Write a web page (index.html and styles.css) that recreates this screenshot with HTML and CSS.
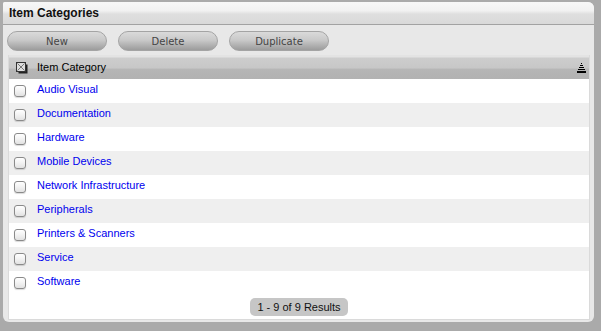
FILE: index.html
```html
<!DOCTYPE html>
<html lang="en">

<head>
    <meta charset="UTF-8">
    <title>Item Categories</title>
    <link rel="stylesheet" href="styles.css">
</head>

<body>
    <div class="panel">
        <div class="panel-title">Item Categories</div>

        <div class="toolbar">
            <button class="btn">New</button>
            <button class="btn">Delete</button>
            <button class="btn">Duplicate</button>
        </div>

        <div class="list">
            <div class="list-head">
                <svg class="select-all" width="12" height="12" viewBox="0 0 12 12">
                    <rect x="2.5" y="2.5" width="9" height="9" fill="#222"/>
                    <rect x="0.5" y="0.5" width="9" height="9" fill="#ddd" stroke="#333"/>
                    <path d="M1.5 1.5 L8.5 8.5 M8.5 1.5 L1.5 8.5" stroke="#777" stroke-width="1"/>
                </svg>
                <span class="head-label">Item Category</span>
                <svg class="sort" width="9" height="10" viewBox="0 0 9 10">
                    <rect x="4" y="0" width="1" height="1" fill="#000"/>
                    <rect x="3" y="2" width="3" height="1" fill="#000"/>
                    <rect x="2" y="4" width="5" height="1" fill="#000"/>
                    <rect x="1" y="6" width="7" height="1" fill="#000"/>
                    <rect x="0" y="8" width="9" height="2" fill="#000"/>
                </svg>
            </div>

            <div class="rows">
                <div class="row"><span class="check"></span><a href="#">Audio Visual</a></div>
                <div class="row"><span class="check"></span><a href="#">Documentation</a></div>
                <div class="row"><span class="check"></span><a href="#">Hardware</a></div>
                <div class="row"><span class="check"></span><a href="#">Mobile Devices</a></div>
                <div class="row"><span class="check"></span><a href="#">Network Infrastructure</a></div>
                <div class="row"><span class="check"></span><a href="#">Peripherals</a></div>
                <div class="row"><span class="check"></span><a href="#">Printers &amp; Scanners</a></div>
                <div class="row"><span class="check"></span><a href="#">Service</a></div>
                <div class="row"><span class="check"></span><a href="#">Software</a></div>
            </div>

            <div class="list-foot">
                <span class="results">1 - 9 of 9 Results</span>
            </div>
        </div>
    </div>
</body>

</html>
```

FILE: styles.css
```css
html,
body {
    margin: 0;
    height: 100%;
}

body {
    background: #aaaaaa;
    padding: 2px 7px 9px 3px;
    box-sizing: border-box;
    font-family: "Liberation Sans", Arial, sans-serif;
    font-size: 11px;
}

.panel {
    height: 320px;
    background: #e8e8e8;
    border-radius: 2px 6px 6px 6px;
    display: flex;
    flex-direction: column;
    overflow: hidden;
}

.panel-title {
    height: 22px;
    line-height: 22px;
    padding-left: 6px;
    font-size: 12px;
    font-weight: bold;
    color: #111;
    background: linear-gradient(#f7f7f7, #f1f1f1 40%, #dfdfdf 55%, #d9d9d9);
    border-bottom: 1px solid #a2a2a2;
}

.toolbar {
    display: flex;
    gap: 11px;
    padding: 6px 0 0 4px;
    height: 24px;
}

.btn {
    width: 100px;
    height: 20px;
    padding: 0;
    border: 1px solid #a4a4a4;
    border-radius: 10px;
    background: linear-gradient(#dadada, #c9c9c9 45%, #b4b4b4 70%, #9c9c9c);
    color: #444;
    font-family: "DejaVu Sans", Verdana, sans-serif;
    font-size: 10px;
    cursor: pointer;
}

.list {
    flex: 1;
    margin: 0 4px 2px 5px;
    background: #fff;
    border: 1px solid #dadada;
    border-top: none;
    display: flex;
    flex-direction: column;
}

.list-head {
    height: 24px;
    display: flex;
    align-items: center;
    padding: 0 3px 0 6px;
    background: linear-gradient(#e3e3e3 0, #e3e3e3 2px, #cdcdcd 3px, #c7c7c7 55%, #b6b6b6 58%, #b2b2b2);
}

.select-all {
    margin: 2px 9px 0 1px;
}

.head-label {
    flex: 1;
    color: #000;
}

.sort {
    margin: 2px 0 0 0;
}

.row {
    height: 24px;
    display: flex;
    align-items: flex-start;
}

.row:nth-child(even) {
    background: #efefef;
}

.check {
    width: 10px;
    height: 10px;
    margin: 6px 10px 0 5px;
    border: 1px solid #8a8a8a;
    border-radius: 3px;
    background: linear-gradient(#ffffff, #f2f2f2 50%, #e2e2e2);
    box-shadow: 0 1px 1px rgba(0, 0, 0, 0.15);
}

.row a {
    padding-top: 4px;
    padding-left: 1px;
    color: #0000ee;
    text-decoration: none;
}

.list-foot {
    flex: 1;
    display: flex;
    justify-content: center;
    align-items: flex-end;
    padding-bottom: 3px;
}

.results {
    height: 18px;
    line-height: 18px;
    padding: 0 7px;
    border-radius: 5px;
    background: #c6c6c6;
    color: #111;
}
```
